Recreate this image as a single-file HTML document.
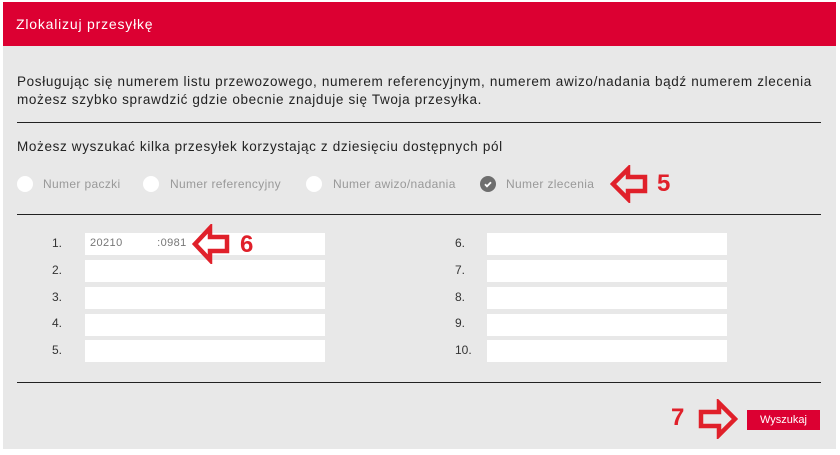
<!DOCTYPE html>
<html><head><meta charset="utf-8"><style>
body{margin:0;width:840px;height:455px;background:#fff;font-family:"Liberation Sans",sans-serif;position:relative;overflow:hidden}
.panel{position:absolute;left:3px;top:2px;width:833px;height:447px;background:#e8e8e8}
.hdr{position:absolute;left:3px;top:2px;width:833px;height:44px;background:#dc0032;color:#fff;font-size:14px;letter-spacing:0.8px;line-height:44px;padding-left:13px;box-sizing:border-box}
.t{position:absolute;color:#222;font-size:13.5px;letter-spacing:0.65px;white-space:nowrap}
.line{position:absolute;left:17px;width:804px;height:1px;background:#222}
.radio{position:absolute;top:176px;width:16px;height:16px;border-radius:50%;background:#fff}
.rl{position:absolute;top:177px;font-size:12px;letter-spacing:0.35px;color:#999}
.inp{position:absolute;width:240px;height:22px;background:#fff}
.lab{position:absolute;font-size:12px;color:#333}
.btn{position:absolute;left:747px;top:410px;width:73px;height:20px;background:#dc0032;color:#fff;font-size:11px;text-align:center;line-height:20px}
.num{position:absolute;color:#e0202a;font-weight:bold;font-size:24px}
</style></head><body>
<div class="panel"></div>
<div class="hdr">Zlokalizuj przesyłkę</div>
<div class="t" style="left:17px;top:73px;line-height:18px">Posługując się numerem listu przewozowego, numerem referencyjnym, numerem awizo/nadania bądź numerem zlecenia<br>możesz szybko sprawdzić gdzie obecnie znajduje się Twoja przesyłka.</div>
<div class="line" style="top:122px"></div>
<div class="t" style="left:17px;top:139px">Możesz wyszukać kilka przesyłek korzystając z dziesięciu dostępnych pól</div>
<div class="radio" style="left:17px"></div><div class="rl" style="left:43px">Numer paczki</div>
<div class="radio" style="left:143px"></div><div class="rl" style="left:170px">Numer referencyjny</div>
<div class="radio" style="left:306px"></div><div class="rl" style="left:333px">Numer awizo/nadania</div>
<div class="radio" style="left:480px;background:#6e6e6e"><svg width="16" height="16"><path d="M5 8.3l2 2 4-4" stroke="#fff" stroke-width="1.8" fill="none"/></svg></div><div class="rl" style="left:506px">Numer zlecenia</div>
<svg style="position:absolute;left:610px;top:165px" width="40" height="38"><path d="M3 19L18 4v8h17v14H18v8z" fill="none" stroke="#e0202a" stroke-width="4.5"/></svg>
<div class="num" style="left:657px;top:170px">5</div>
<div class="line" style="top:214px"></div>
<div class="lab" style="left:52px;top:236px">1.</div><div class="inp" style="left:85px;top:233px"><span style="position:absolute;left:5px;top:4px;font-size:11px;letter-spacing:0.4px;color:#777">20210&nbsp;&nbsp;&nbsp;&nbsp;&nbsp;&nbsp;&nbsp;&nbsp;&nbsp;&nbsp;:0981</span></div>
<div class="lab" style="left:52px;top:263px">2.</div><div class="inp" style="left:85px;top:260px"></div>
<div class="lab" style="left:52px;top:290px">3.</div><div class="inp" style="left:85px;top:287px"></div>
<div class="lab" style="left:52px;top:316px">4.</div><div class="inp" style="left:85px;top:314px"></div>
<div class="lab" style="left:52px;top:343px">5.</div><div class="inp" style="left:85px;top:340px"></div>
<div class="lab" style="left:455px;top:236px">6.</div><div class="inp" style="left:487px;top:233px"></div>
<div class="lab" style="left:455px;top:263px">7.</div><div class="inp" style="left:487px;top:260px"></div>
<div class="lab" style="left:455px;top:290px">8.</div><div class="inp" style="left:487px;top:287px"></div>
<div class="lab" style="left:455px;top:316px">9.</div><div class="inp" style="left:487px;top:314px"></div>
<div class="lab" style="left:455px;top:343px">10.</div><div class="inp" style="left:487px;top:340px"></div>
<svg style="position:absolute;left:192px;top:224px" width="40" height="40"><path d="M3 20L18 4v9h17v14H18v9z" fill="none" stroke="#e0202a" stroke-width="4.5"/></svg>
<div class="num" style="left:240px;top:231px">6</div>
<div class="line" style="top:382px"></div>
<div class="num" style="left:671px;top:404px">7</div>
<svg style="position:absolute;left:696px;top:399px" width="42" height="40"><path d="M39 20L23 4v9H5v14h18v9z" fill="none" stroke="#e0202a" stroke-width="4.5"/></svg>
<div class="btn">Wyszukaj</div>
</body></html>
